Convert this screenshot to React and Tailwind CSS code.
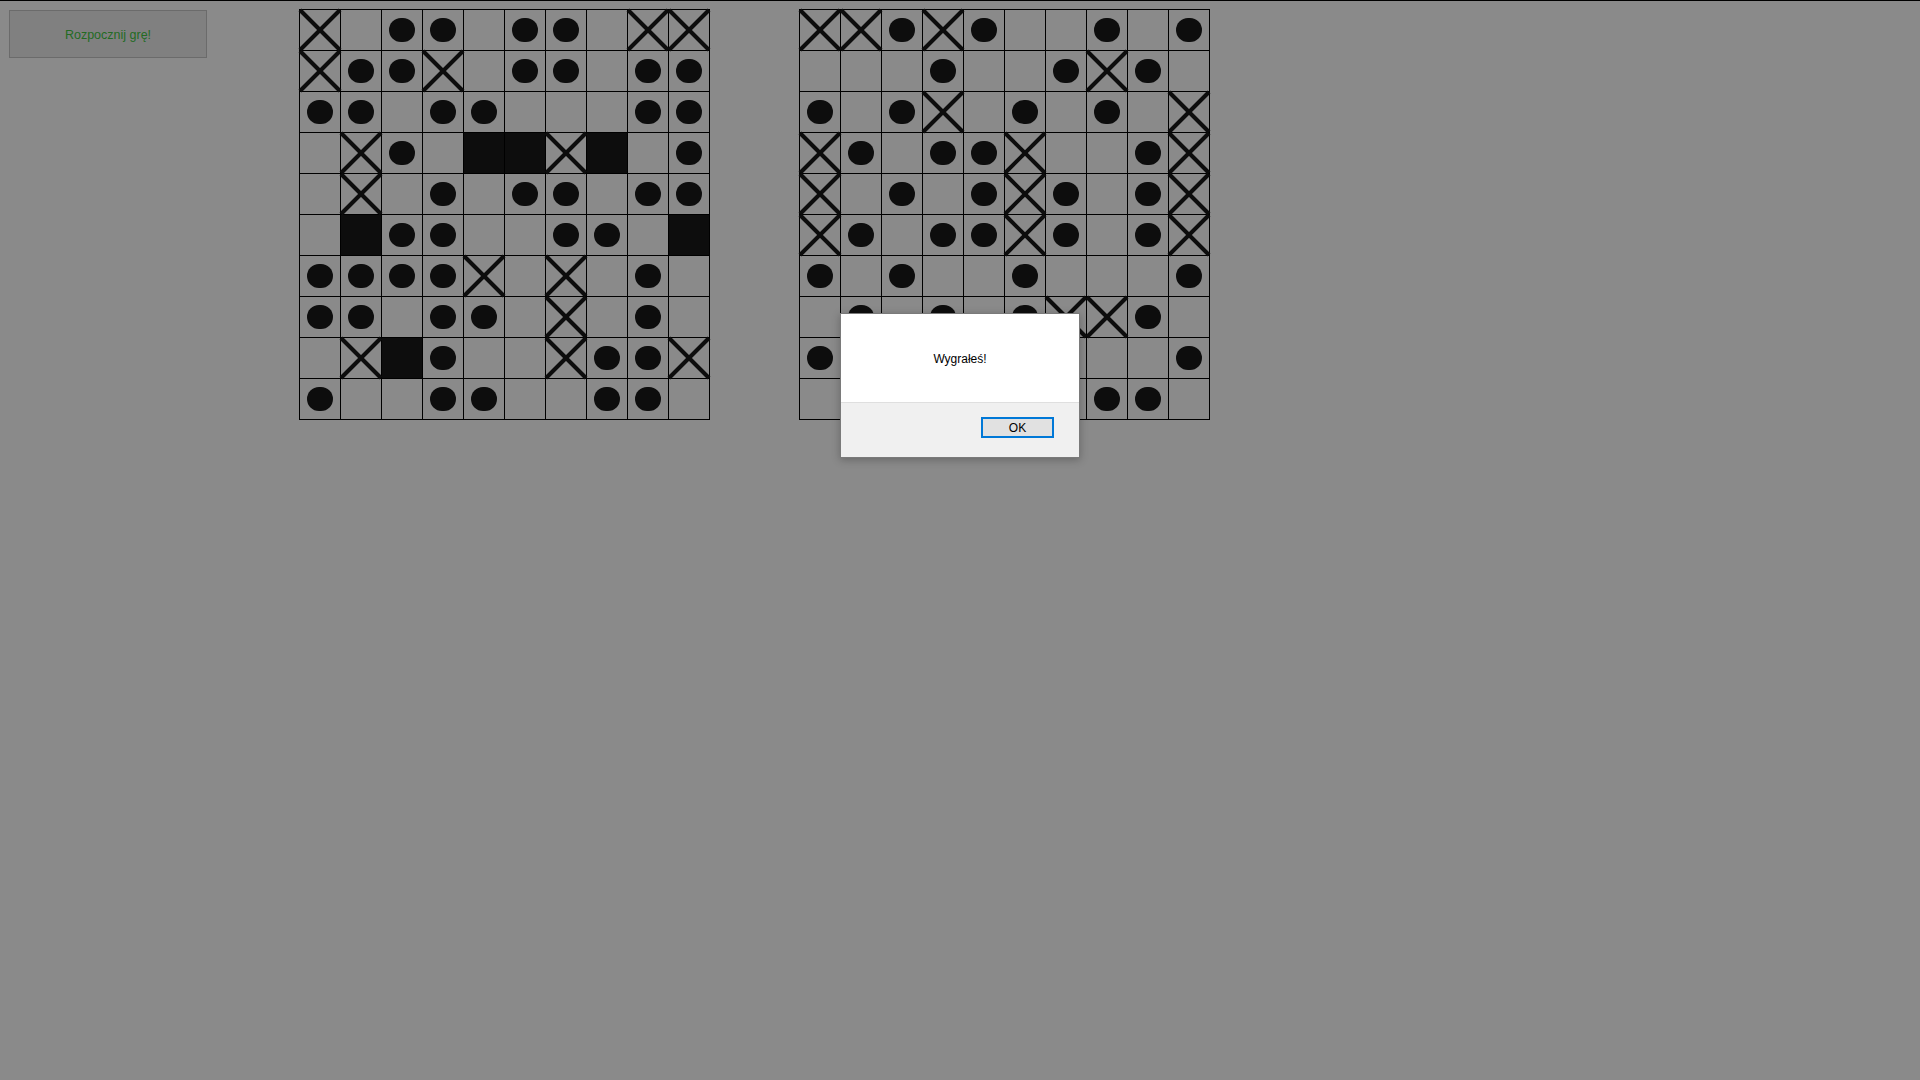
import React from 'react';

// o = circle, x = cross, b = filled, . = empty
const LEFT = [
  'x.oo.oo.xx',
  'xoox.oo.oo',
  'oo.oo...oo',
  '.xo.bbxb.o',
  '.x.o.oo.oo',
  '.boo..oo.b',
  'oooox.x.o.',
  'oo.oo.x.o.',
  '.xbo..xoox',
  'o..oo..oo.',
];

const RIGHT = [
  'xxoxo..o.o',
  '...o..oxo.',
  'o.ox.o.o.x',
  'xo.oox..ox',
  'x.o.oxo.ox',
  'xo.ooxo.ox',
  'o.o..o...o',
  '.o.o.oxxo.',
  'o........o',
  '.......oo.',
];

function Cell({ kind }) {
  if (kind === 'b') {
    return <div className="w-[41px] h-[41px] border-r border-b border-black bg-[#0d0d0d]" />;
  }
  return (
    <div className="w-[41px] h-[41px] border-r border-b border-black flex items-center justify-center">
      {kind === 'o' && <div className="w-[26px] h-[24px] rounded-full bg-[#0d0d0d]" />}
      {kind === 'x' && (
        <svg width="40" height="40" viewBox="0 0 40 40" className="overflow-visible">
          <line x1="0" y1="0" x2="40" y2="40" stroke="#0d0d0d" strokeWidth="4" />
          <line x1="40" y1="0" x2="0" y2="40" stroke="#0d0d0d" strokeWidth="4" />
        </svg>
      )}
    </div>
  );
}

function Board({ rows }) {
  return (
    <div className="grid grid-cols-[repeat(10,41px)] border-l border-t border-black w-max">
      {rows.map((row, r) =>
        row.split('').map((k, c) => <Cell key={`${r}-${c}`} kind={k} />)
      )}
    </div>
  );
}

export default function App() {
  return (
    <div className="relative min-h-screen bg-[#8a8a8a] border-t border-black font-['Liberation_Sans',Arial,sans-serif]">
      <div className="flex items-start pt-[8px] pl-[9px]">
        <button className="mt-[1px] w-[198px] h-[48px] pt-[2px] border border-[#6b6b6b] bg-[#808080] text-[#236b23] text-[12.5px]">
          Rozpocznij grę!
        </button>
        <div className="ml-[92px]">
          <Board rows={LEFT} />
        </div>
        <div className="ml-[89px]">
          <Board rows={RIGHT} />
        </div>
      </div>

      {/* alert dialog */}
      <div className="absolute left-[840px] top-[312px] w-[240px] h-[145px] bg-white border border-[#7a7a7a] shadow-[0_2px_8px_rgba(0,0,0,0.25)] flex flex-col">
        <div className="flex-1 flex items-center justify-center text-[12px] text-black pt-[2px]">
          Wygrałeś!
        </div>
        <div className="h-[55px] bg-[#f0f0f0] border-t border-[#dfdfdf] flex items-start justify-end pt-[14px] pr-[25px]">
          <button className="w-[73px] h-[21px] border-2 border-[#0078d7] bg-[#e1e1e1] text-[12px] text-black leading-none">
            OK
          </button>
        </div>
      </div>
    </div>
  );
}
